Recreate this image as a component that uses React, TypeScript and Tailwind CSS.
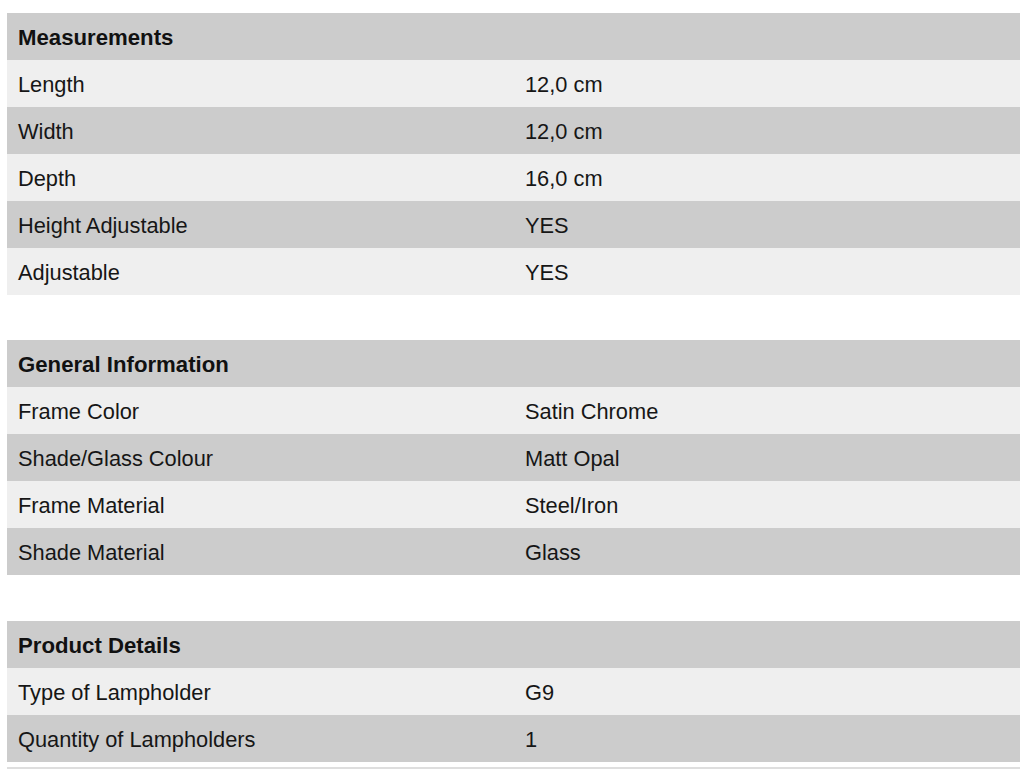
import React from 'react';

type Section = {
  title: string;
  rows: [string, string][];
};

const sections: Section[] = [
  {
    title: 'Measurements',
    rows: [
      ['Length', '12,0 cm'],
      ['Width', '12,0 cm'],
      ['Depth', '16,0 cm'],
      ['Height Adjustable', 'YES'],
      ['Adjustable', 'YES'],
    ],
  },
  {
    title: 'General Information',
    rows: [
      ['Frame Color', 'Satin Chrome'],
      ['Shade/Glass Colour', 'Matt Opal'],
      ['Frame Material', 'Steel/Iron'],
      ['Shade Material', 'Glass'],
    ],
  },
  {
    title: 'Product Details',
    rows: [
      ['Type of Lampholder', 'G9'],
      ['Quantity of Lampholders', '1'],
    ],
  },
];

const SpecTable: React.FC<{ section: Section }> = ({ section }) => {
  return (
    <div className="w-full">
      <div className="h-[47px] bg-[#cccccc] flex items-center pt-[3px] px-[11px] font-bold text-[22.2px] text-[#111]">
        {section.title}
      </div>
      {section.rows.map(([label, value], i) => (
        <div
          key={label}
          className={`h-[47px] flex items-center pt-[3px] ${i % 2 === 0 ? 'bg-[#efefef]' : 'bg-[#cccccc]'}`}
        >
          <div className="w-[507px] px-[11px] shrink-0">{label}</div>
          <div className="flex-1 px-[11px]">{value}</div>
        </div>
      ))}
    </div>
  );
};

export default function App() {
  return (
    <div
      className="bg-white w-[1020px] h-[771px] overflow-hidden pt-[13px] pl-[7px] text-[21.8px] text-[#161616]"
      style={{ fontFamily: '"Liberation Sans", Arial, sans-serif' }}
    >
      <div className="w-[1030px] flex flex-col">
        <div className="mb-[45px]">
          <SpecTable section={sections[0]} />
        </div>
        <div className="mb-[46px]">
          <SpecTable section={sections[1]} />
        </div>
        <SpecTable section={sections[2]} />
        <div className="mt-[5px] h-[2px] bg-[#dedede]" />
      </div>
    </div>
  );
}
